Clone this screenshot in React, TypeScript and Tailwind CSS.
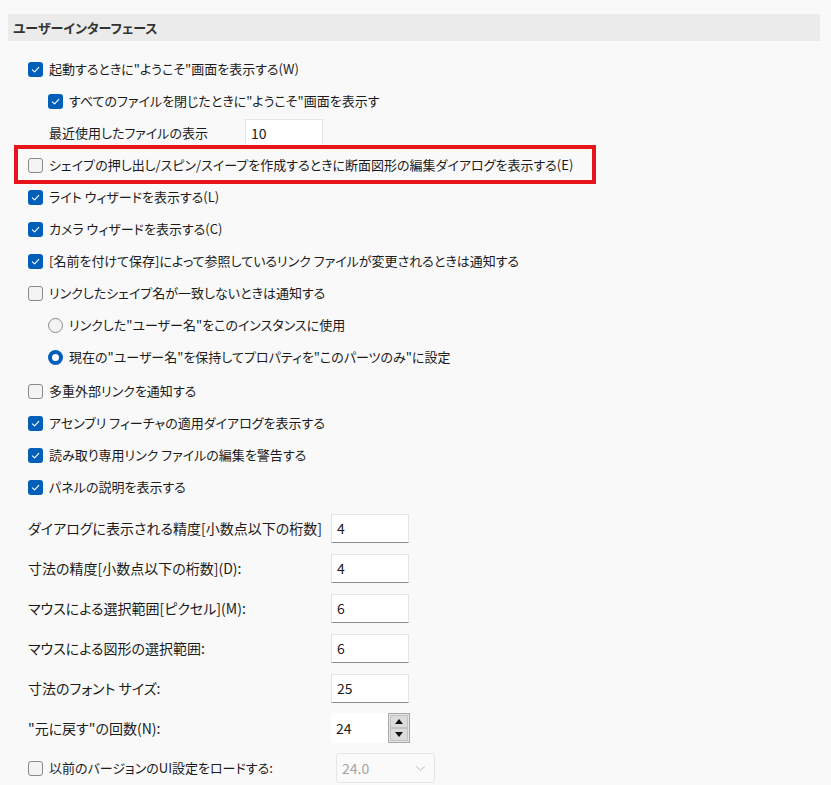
import React from 'react';

const font = "font-['Noto_Sans_CJK_JP','Noto_Sans',sans-serif] [font-feature-settings:'palt']";

const Check = ({ checked }: { checked?: boolean }) =>
  checked ? (
    <span className="flex h-[15px] w-[15px] shrink-0 items-center justify-center rounded-[3px] bg-[#005fb8]">
      <svg viewBox="0 0 12 12" className="h-[11px] w-[11px]">
        <path d="M2.6 6.3 L5 8.6 L9.6 3.6" stroke="white" strokeWidth="1.2" fill="none" strokeLinecap="round" strokeLinejoin="round" />
      </svg>
    </span>
  ) : (
    <span className="h-[15px] w-[15px] shrink-0 rounded-[3px] border border-[#8a8a8a] bg-[#f3f3f3]" />
  );

const Radio = ({ checked }: { checked?: boolean }) =>
  checked ? (
    <span className="flex h-[15px] w-[15px] shrink-0 items-center justify-center rounded-full bg-[#005fb8]">
      <span className="h-[7px] w-[7px] rounded-full bg-white" />
    </span>
  ) : (
    <span className="h-[15px] w-[15px] shrink-0 rounded-full border border-[#8a8a8a] bg-[#f3f3f3]" />
  );

const CheckRow = ({ label, checked, indent }: { label: string; checked?: boolean; indent?: boolean }) => (
  <div className={`flex h-8 items-center gap-[6px] ${indent ? 'pl-[48px]' : 'pl-[28px]'}`}>
    <Check checked={checked} />
    <span>{label}</span>
  </div>
);

const Field = ({ value }: { value: string }) => (
  <div className="flex h-[29px] w-[78px] items-center border border-[#e5e5e5] border-b-[#8d8d8d] bg-white pl-[5px] text-[14px]">
    {value}
  </div>
);

const NumRow = ({ label, value }: { label: string; value: string }) => (
  <div className="flex h-10 items-center pl-[28px]">
    <span className="w-[303px] text-[14px]">{label}</span>
    <Field value={value} />
  </div>
);

export default function App() {
  return (
    <div className={`h-[785px] w-[831px] overflow-hidden bg-[#f9f9f9] text-[13px] text-[#1b1b1b] ${font}`}>
      <div className="mx-2 mt-[14px] flex h-[27px] w-[812px] items-center bg-[#ebebeb] pl-[5px] font-semibold text-[#333]">
        ユーザーインターフェース
      </div>
      <div className="mt-3 flex flex-col">
        <CheckRow checked label={'起動するときに"ようこそ"画面を表示する(W)'} />
        <CheckRow checked indent label={'すべてのファイルを閉じたときに"ようこそ"画面を表示す'} />
        <div className="flex h-8 items-center pl-[49px]">
          <span className="w-[196px]">最近使用したファイルの表示</span>
          <Field value="10" />
        </div>
        <div className="relative">
          <CheckRow label="シェイプの押し出し/スピン/スイープを作成するときに断面図形の編集ダイアログを表示する(E)" />
          <div className="absolute left-[14px] top-[-4px] h-[39px] w-[582px] border-4 border-[#e8141c]" />
        </div>
        <CheckRow checked label="ライト ウィザードを表示する(L)" />
        <CheckRow checked label="カメラ ウィザードを表示する(C)" />
        <CheckRow checked label="[名前を付けて保存]によって参照しているリンク ファイルが変更されるときは通知する" />
        <CheckRow label="リンクしたシェイプ名が一致しないときは通知する" />
        <div className="flex h-8 items-center gap-[6px] pl-[48px]">
          <Radio />
          <span>リンクした"ユーザー名"をこのインスタンスに使用</span>
        </div>
        <div className="flex h-8 items-center gap-[6px] pl-[48px]">
          <Radio checked />
          <span>現在の"ユーザー名"を保持してプロパティを"このパーツのみ"に設定</span>
        </div>
        <div className="mt-[2px]" />
        <CheckRow label="多重外部リンクを通知する" />
        <CheckRow checked label="アセンブリ フィーチャの適用ダイアログを表示する" />
        <CheckRow checked label="読み取り専用リンク ファイルの編集を警告する" />
        <CheckRow checked label="パネルの説明を表示する" />
        <div className="mt-[5px]" />
        <NumRow label="ダイアログに表示される精度[小数点以下の桁数]" value="4" />
        <NumRow label="寸法の精度[小数点以下の桁数](D):" value="4" />
        <NumRow label="マウスによる選択範囲[ピクセル](M):" value="6" />
        <NumRow label="マウスによる図形の選択範囲:" value="6" />
        <NumRow label="寸法のフォント サイズ:" value="25" />
        <div className="flex h-10 items-center pl-[28px]">
          <span className="w-[303px] text-[14px]">"元に戻す"の回数(N):</span>
          <div className="flex h-[30px] items-stretch">
            <div className="flex w-[57px] items-center bg-white pl-[5px] text-[14px]">24</div>
            <div className="flex w-[22px] flex-col border border-[#a6a6a6] bg-[#e6e6e6] p-px">
              <div className="flex flex-1 items-center justify-center border border-[#c2c2c2] bg-[#dcdcdc]">
                <svg viewBox="0 0 8 5" className="h-[5px] w-[8px]"><path d="M4 0 L8 5 L0 5 Z" fill="#111" /></svg>
              </div>
              <div className="flex flex-1 items-center justify-center border border-[#c2c2c2] bg-[#dcdcdc]">
                <svg viewBox="0 0 8 5" className="h-[5px] w-[8px]"><path d="M0 0 L8 0 L4 5 Z" fill="#111" /></svg>
              </div>
            </div>
          </div>
        </div>
        <div className="flex h-10 items-center pl-[28px]">
          <div className="flex w-[308px] items-center gap-[6px]">
            <Check />
            <span>以前のバージョンのUI設定をロードする:</span>
          </div>
          <div className="flex h-[30px] w-[99px] items-center justify-between rounded-[3px] border border-[#e5e5e5] bg-[#fafafa] pl-[5px] pr-[8px] text-[14px] text-[#a3a3a3]">
            <span>24.0</span>
            <svg viewBox="0 0 12 8" className="h-[7px] w-[11px]"><path d="M1 1.5 L6 6 L11 1.5" stroke="#b5b5b5" strokeWidth="1" fill="none" /></svg>
          </div>
        </div>
      </div>
    </div>
  );
}
